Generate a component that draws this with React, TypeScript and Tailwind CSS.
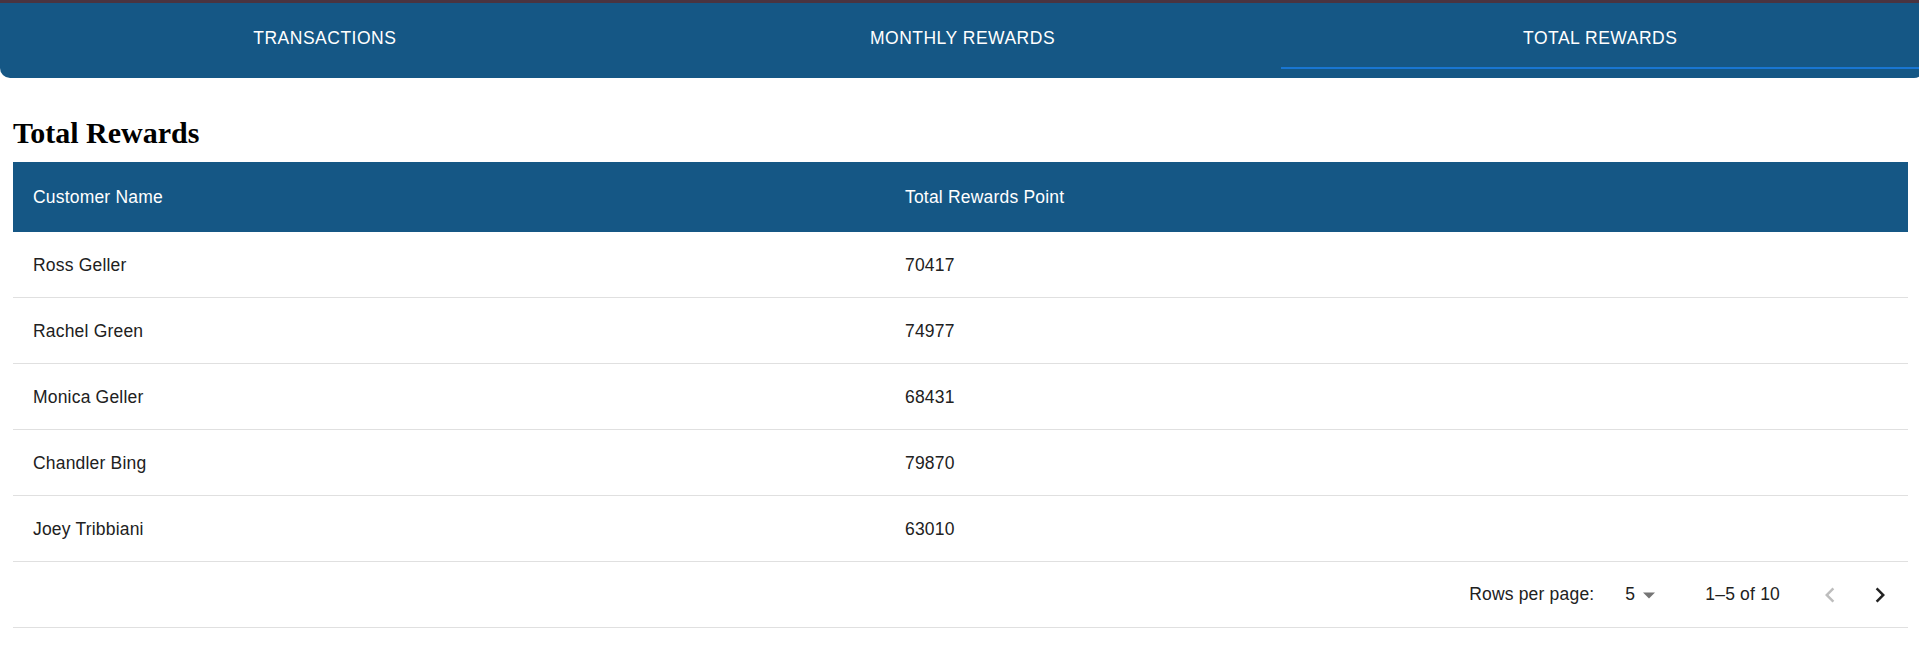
import React from "react";

const rows = [
  { name: "Ross Geller", points: 70417 },
  { name: "Rachel Green", points: 74977 },
  { name: "Monica Geller", points: 68431 },
  { name: "Chandler Bing", points: 79870 },
  { name: "Joey Tribbiani", points: 63010 },
];

function Tab({ label, selected }: { label: string; selected?: boolean }) {
  return (
    <div
      className={
        "flex-1 h-[66px] pt-[6px] flex items-center justify-center text-white text-[17.5px] uppercase tracking-[0.5px] border-b-2 " +
        (selected ? "border-[#1976d2]" : "border-transparent")
      }
    >
      {label}
    </div>
  );
}

export default function App() {
  return (
    <div className="w-full min-h-screen bg-white overflow-hidden font-['Liberation_Sans',Arial,sans-serif]">
      <div className="h-[3px] bg-[#4a3440]" />
      <div className="h-[75px] bg-[#155785] rounded-b-[10px] mr-[-5px] pr-[5px]">
        <div className="flex pl-[6px]">
          <Tab label="Transactions" />
          <Tab label="Monthly Rewards" />
          <Tab label="Total Rewards" selected />
        </div>
      </div>

      <div className="pl-[13px] pr-[11px]">
        <h2 className="mt-[38px] mb-[12px] leading-[34px] text-[30px] font-bold text-black font-['Liberation_Serif','Times_New_Roman',serif]">
          Total Rewards
        </h2>

        <div className="w-full">
          <div className="grid grid-cols-[872px_1fr] h-[70px] items-center bg-[#155785] text-white text-[17.5px] tracking-[0.19px]">
            <div className="pl-[20px]">Customer Name</div>
            <div className="pl-[20px]">Total Rewards Point</div>
          </div>
          {rows.map((r) => (
            <div
              key={r.name}
              className="grid grid-cols-[872px_1fr] h-[66px] pt-[2px] items-center border-b border-[#e0e0e0] text-[#212121] text-[17.5px] tracking-[0.19px]"
            >
              <div className="pl-[20px]">{r.name}</div>
              <div className="pl-[20px]">{r.points}</div>
            </div>
          ))}
          <div className="h-[66px] border-b border-[#e0e0e0] flex justify-end items-center pr-[3px] text-[#212121] text-[17.5px] tracking-[0.19px]">
            <span>Rows per page:</span>
            <div className="flex items-center ml-[31px]">
              <span>5</span>
              <svg width="12" height="7" viewBox="0 0 10 5" className="ml-[8px] mt-[2px]">
                <path d="M0 0l5 5 5-5z" fill="#757575" />
              </svg>
            </div>
            <span className="ml-[50px]">1–5 of 10</span>
            <div className="ml-[25px] w-[50px] h-[50px] flex items-center justify-center">
              <svg width="30" height="30" viewBox="0 0 24 24">
                <path d="M15.41 7.41 14 6l-6 6 6 6 1.41-1.41L10.83 12z" fill="#bdbdbd" />
              </svg>
            </div>
            <div className="w-[50px] h-[50px] flex items-center justify-center">
              <svg width="30" height="30" viewBox="0 0 24 24">
                <path d="M10 6 8.59 7.41 13.17 12l-4.58 4.59L10 18l6-6z" fill="#222222" />
              </svg>
            </div>
          </div>
        </div>
      </div>
    </div>
  );
}
